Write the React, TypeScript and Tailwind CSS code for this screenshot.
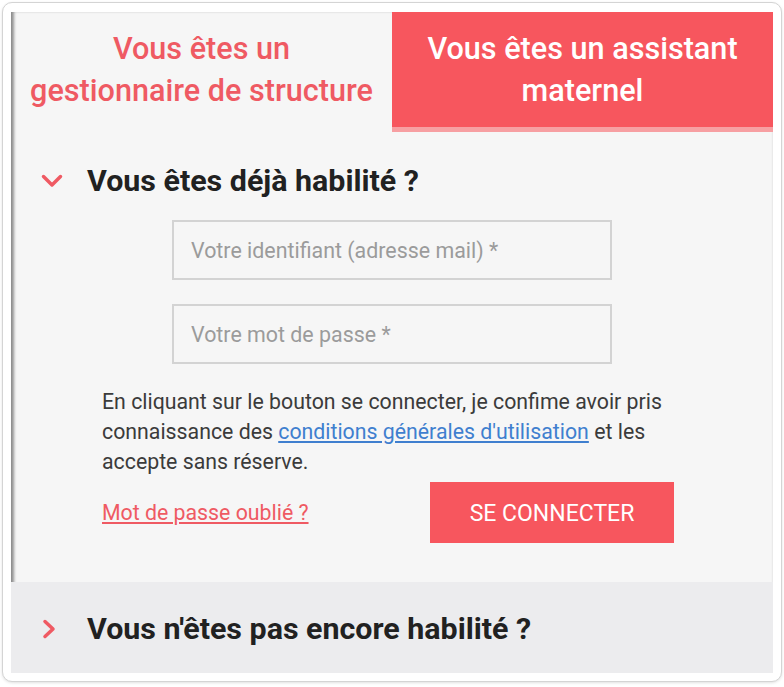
import React from "react";

function ChevronDown() {
  return (
    <svg width="22" height="14" viewBox="0 0 22 14" fill="none">
      <path
        d="M2.5 2.5 L11 11 L19.5 2.5"
        stroke="#ef5a63"
        strokeWidth="3.5"
        strokeLinecap="round"
        strokeLinejoin="round"
      />
    </svg>
  );
}

function ChevronRight() {
  return (
    <svg width="14" height="20" viewBox="0 0 14 20" fill="none">
      <path
        d="M3 2.5 L11 10 L3 17.5"
        stroke="#ef5a63"
        strokeWidth="3.5"
        strokeLinecap="round"
        strokeLinejoin="round"
      />
    </svg>
  );
}

export default function App() {
  return (
    <div className="h-[687px] w-[784px] bg-white px-[2px] pt-[2px] pb-[5px] font-['Roboto',sans-serif]">
      <div className="h-full rounded-[10px] border border-[#d4d4d4] bg-white pt-[9px] pr-[8px] pb-[8px] pl-[8px] shadow-[0_1px_3px_rgba(0,0,0,0.12)]">
        <div className="flex h-full flex-col bg-[#f6f6f6] shadow-[inset_4px_0_3px_-1px_rgba(0,0,0,0.4),inset_0_-5px_3px_-1px_rgba(0,0,0,0.35)]">
          {/* tabs */}
          <div className="flex h-[120px]">
            <button className="flex flex-1 items-center justify-center pb-[5px] text-center text-[30.6px] font-medium leading-[42px] text-[#ef5a63]">
              Vous êtes un
              <br />
              gestionnaire de structure
            </button>
            <button className="flex flex-1 items-center justify-center border-b-[5px] border-[#f79fa2] bg-[#f7565e] text-center text-[30.6px] font-medium leading-[42px] text-white">
              Vous êtes un assistant
              <br />
              maternel
            </button>
          </div>

          {/* already registered */}
          <div className="pt-[29px] pb-[39px]">
            <div className="flex h-[40px] items-center gap-[24px] pl-[30px]">
              <ChevronDown />
              <h2 className="text-[30.4px] font-bold text-[#212121]">
                Vous êtes déjà habilité ?
              </h2>
            </div>

            <div className="mx-auto mt-[19px] flex w-[440px] flex-col gap-[24px]">
              <input
                type="email"
                placeholder="Votre identifiant (adresse mail) *"
                className="h-[60px] border-2 border-[#d3d3d3] bg-transparent px-[17px] text-[21.4px] text-[#333] placeholder:text-[#9b9b9b] focus:outline-none"
              />
              <input
                type="password"
                placeholder="Votre mot de passe *"
                className="h-[60px] border-2 border-[#d3d3d3] bg-transparent px-[17px] text-[21.4px] text-[#333] placeholder:text-[#9b9b9b] focus:outline-none"
              />
            </div>

            <div className="mx-auto mt-[23px] w-[580px]">
              <p className="text-[21.3px] leading-[30px] text-[#3b3b3b]">
                En cliquant sur le bouton se connecter, je confime avoir pris
                connaissance des{" "}
                <a href="#" className="text-[#3f7fcf] underline">
                  conditions générales d'utilisation
                </a>{" "}
                et les accepte sans réserve.
              </p>

              <div className="mt-[5px] flex items-center justify-between pr-[8px]">
                <a href="#" className="text-[21.3px] text-[#ef5a63] underline">
                  Mot de passe oublié ?
                </a>
                <button className="h-[61px] w-[244px] pt-[3px] bg-[#f7565e] text-[23px] text-white">
                  SE CONNECTER
                </button>
              </div>
            </div>
          </div>

          {/* not yet registered */}
          <div className="flex flex-1 items-center gap-[31px] bg-[#ececee] pt-[3px] pl-[31px]">
            <ChevronRight />
            <h2 className="text-[30.4px] font-bold text-[#212121]">
              Vous n'êtes pas encore habilité ?
            </h2>
          </div>
        </div>
      </div>
    </div>
  );
}
